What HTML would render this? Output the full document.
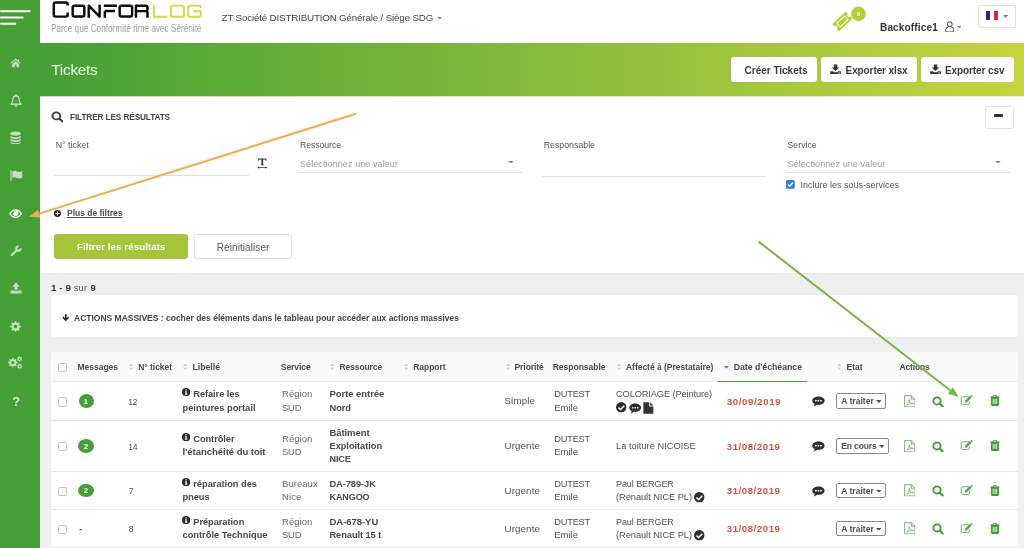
<!DOCTYPE html>
<html lang="fr"><head><meta charset="utf-8"><title>Tickets</title>
<style>
html,body{margin:0;padding:0}
body{width:1024px;height:548px;overflow:hidden;position:relative;background:#efefef;font-family:"Liberation Sans",sans-serif}
.a{position:absolute}
.t{position:absolute;white-space:pre;font-family:"Liberation Sans",sans-serif}
#side{left:0;top:0;width:40.4px;height:548px;background:#44a035}
#top{left:40px;top:0;width:984px;height:43px;background:#fff}
#bar{left:40px;top:43px;width:984px;height:53.3px;background:linear-gradient(90deg,#44a035 0%,#c6d440 100%)}
#filt{left:40px;top:96px;width:984px;height:177px;background:#fff;border-bottom:1px solid #e8e8e8}
.card{background:#fff;border-radius:3px}
.ul{height:1px;background:#e1e1e1}
.btnw{background:#fff;border-radius:3px}
.cb{width:7.3px;height:7.3px;border:.8px solid #c6c6c6;border-radius:2px;background:#fff}
.sep{left:51px;width:967px;height:1px;background:#e8e8e8}
.st{border:1px solid #8a8a8a;border-radius:2px;background:#fff;box-sizing:border-box}
.badge{background:#44a035;border-radius:50%}
#tx{position:absolute;left:0;top:0;width:1024px;height:548px;will-change:transform}

</style></head>
<body>
<div class="a" id="top"></div>
<div class="a" id="bar"></div>
<div class="a" id="filt"></div>
<div class="a" style="left:40px;top:96px;width:984px;height:1px;opacity:.32;background:linear-gradient(90deg,#44a035 0%,#c6d440 100%)"></div>
<div class="a" id="side"></div>
<!-- header buttons -->
<div class="a btnw" style="left:731px;top:57px;width:86px;height:25px"></div>
<div class="a btnw" style="left:821px;top:57px;width:95.5px;height:25px"></div>
<div class="a btnw" style="left:920.5px;top:57px;width:93.5px;height:25px"></div>
<div class="a" style="left:978px;top:5px;width:38px;height:23px;border:1px solid #ddd;border-radius:2px;box-sizing:border-box"></div>
<!-- filter panel -->
<div class="a" style="left:984.5px;top:105.5px;width:29px;height:23px;border:1px solid #e2e2e2;border-radius:3px;box-sizing:border-box"></div>
<div class="a" style="left:993.75px;top:114px;width:9.5px;height:3px;background:#333;border-radius:1px"></div>
<div class="a ul" style="left:54px;top:175px;width:195px"></div>
<div class="a ul" style="left:298px;top:172px;width:224px"></div>
<div class="a ul" style="left:542px;top:176px;width:224px"></div>
<div class="a ul" style="left:786px;top:172px;width:224px"></div>
<div class="a" style="left:54.25px;top:234.25px;width:134px;height:24.5px;background:#a5c63b;border-radius:3px"></div>
<div class="a" style="left:194.25px;top:234.25px;width:97.75px;height:24.5px;background:#fff;border:1px solid #e0e0e0;border-radius:3px;box-sizing:border-box"></div>
<!-- cards -->
<div class="a card" style="left:51px;top:295px;width:967px;height:42px"></div>
<div class="a" style="left:51px;top:352px;width:967px;height:196px;background:#fff;border-radius:3px 3px 0 0"></div>
<div class="a" style="left:51px;top:352px;width:967px;height:29px;background:#fafafa;border-radius:3px 3px 0 0;border-bottom:1px solid #eee"></div>
<div class="a" style="left:718px;top:380.5px;width:89px;height:1.5px;background:#44a035"></div>
<div class="a sep" style="top:420px"></div>
<div class="a sep" style="top:471px"></div>
<div class="a sep" style="top:509px"></div>
<div class="a sep" style="top:547px"></div>
<!-- checkboxes -->
<div class="a cb" style="left:58px;top:362.8px"></div>
<div class="a cb" style="left:58px;top:397.3px"></div>
<div class="a cb" style="left:58px;top:442.2px"></div>
<div class="a cb" style="left:58px;top:487px"></div>
<div class="a cb" style="left:58px;top:524.7px"></div>
<!-- badges -->
<div class="a badge" style="left:78.5px;top:394.2px;width:15px;height:14px"></div>
<div class="a badge" style="left:78.25px;top:439.3px;width:16px;height:13.6px"></div>
<div class="a badge" style="left:78.25px;top:484.2px;width:16px;height:13.2px"></div>
<!-- state buttons -->
<div class="a st" style="left:836px;top:393px;width:50px;height:16px"></div>
<div class="a st" style="left:836px;top:438px;width:53px;height:16px"></div>
<div class="a st" style="left:836px;top:483px;width:50px;height:15px"></div>
<div class="a st" style="left:836px;top:521px;width:50px;height:15px"></div>

<div id="tx">
<span class="t" style="left:221.60px;top:11.00px;font-size:9.75px;line-height:13.65px;font-weight:400;color:#444;letter-spacing:-0.152px;">ZT Société DISTRIBUTION Générale / Siège SDG</span>
<span class="t" style="left:880.00px;top:21.00px;font-size:10.0px;line-height:14.0px;font-weight:700;color:#333;letter-spacing:0.169px;">Backoffice1</span>
<span class="t" style="left:51.25px;top:59.00px;font-size:15.25px;line-height:21.35px;font-weight:400;color:rgba(255,255,255,.92);letter-spacing:-0.212px;">Tickets</span>
<span class="t" style="left:744.60px;top:64.00px;font-size:10.0px;line-height:14.0px;font-weight:700;color:#3a3a3a;letter-spacing:-0.016px;">Créer Tickets</span>
<span class="t" style="left:845.60px;top:64.00px;font-size:10.0px;line-height:14.0px;font-weight:700;color:#3a3a3a;letter-spacing:-0.106px;">Exporter xlsx</span>
<span class="t" style="left:945.00px;top:64.00px;font-size:10.0px;line-height:14.0px;font-weight:700;color:#3a3a3a;letter-spacing:-0.099px;">Exporter csv</span>
<span class="t" style="left:70.00px;top:112.00px;font-size:8.25px;line-height:11.55px;font-weight:700;color:#444;letter-spacing:-0.120px;">FILTRER LES RÉSULTATS</span>
<span class="t" style="left:55.75px;top:139.00px;font-size:8.75px;line-height:12.25px;font-weight:400;color:#555;letter-spacing:0.036px;">N° ticket</span>
<span class="t" style="left:300.00px;top:139.00px;font-size:8.75px;line-height:12.25px;font-weight:400;color:#555;letter-spacing:-0.092px;">Ressource</span>
<span class="t" style="left:543.75px;top:139.00px;font-size:8.75px;line-height:12.25px;font-weight:400;color:#555;letter-spacing:0.016px;">Responsable</span>
<span class="t" style="left:787.50px;top:139.00px;font-size:8.75px;line-height:12.25px;font-weight:400;color:#555;letter-spacing:0.009px;">Service</span>
<span class="t" style="left:300.00px;top:158.00px;font-size:9.0px;line-height:12.6px;font-weight:400;color:#999;letter-spacing:0.084px;">Sélectionnez une valeur</span>
<span class="t" style="left:787.50px;top:158.00px;font-size:9.0px;line-height:12.6px;font-weight:400;color:#999;letter-spacing:0.084px;">Sélectionnez une valeur</span>
<span class="t" style="left:800.50px;top:179.00px;font-size:9.0px;line-height:12.6px;font-weight:400;color:#555;letter-spacing:-0.002px;">Inclure les sous-services</span>
<span class="t" style="left:67.00px;top:208.00px;font-size:8.5px;line-height:11.9px;font-weight:700;color:#4c4c4c;letter-spacing:-0.017px;text-decoration:underline;">Plus de filtres</span>
<span class="t" style="left:77.00px;top:240.00px;font-size:9.75px;line-height:13.65px;font-weight:700;color:#fff;letter-spacing:0.060px;">Filtrer les résultats</span>
<span class="t" style="left:216.75px;top:241.00px;font-size:10.0px;line-height:14.0px;font-weight:400;color:#555;letter-spacing:0.082px;">Réinitialiser</span>
<span class="t" style="left:51.00px;top:281.00px;font-size:9.75px;line-height:13.65px;font-weight:700;color:#333;letter-spacing:0.097px;">1 - 9</span>
<span class="t" style="left:73.80px;top:281.00px;font-size:9.4px;line-height:13.16px;font-weight:400;color:#555;letter-spacing:0.123px;">sur</span>
<span class="t" style="left:90.50px;top:281.00px;font-size:9.4px;line-height:13.16px;font-weight:700;color:#333;letter-spacing:0.781px;">9</span>
<span class="t" style="left:74.00px;top:313.00px;font-size:8.5px;line-height:11.9px;font-weight:700;color:#444;letter-spacing:-0.006px;">ACTIONS MASSIVES : cocher des éléments dans le tableau pour accéder aux actions massives</span>
<span class="t" style="left:77.50px;top:362.00px;font-size:8.5px;line-height:11.9px;font-weight:700;color:#4a4a4a;letter-spacing:-0.018px;">Messages</span>
<span class="t" style="left:138.25px;top:362.00px;font-size:8.5px;line-height:11.9px;font-weight:700;color:#4a4a4a;letter-spacing:-0.040px;">N° ticket</span>
<span class="t" style="left:192.50px;top:361.00px;font-size:8.75px;line-height:12.25px;font-weight:700;color:#4a4a4a;letter-spacing:-0.031px;">Libellé</span>
<span class="t" style="left:280.75px;top:362.00px;font-size:8.5px;line-height:11.9px;font-weight:700;color:#4a4a4a;letter-spacing:-0.036px;">Service</span>
<span class="t" style="left:339.50px;top:362.00px;font-size:8.5px;line-height:11.9px;font-weight:700;color:#4a4a4a;letter-spacing:-0.108px;">Ressource</span>
<span class="t" style="left:413.25px;top:362.00px;font-size:8.5px;line-height:11.9px;font-weight:700;color:#4a4a4a;letter-spacing:-0.049px;">Rapport</span>
<span class="t" style="left:514.50px;top:362.00px;font-size:8.5px;line-height:11.9px;font-weight:700;color:#4a4a4a;letter-spacing:-0.064px;">Priorité</span>
<span class="t" style="left:552.75px;top:362.00px;font-size:8.5px;line-height:11.9px;font-weight:700;color:#4a4a4a;letter-spacing:-0.014px;">Responsable</span>
<span class="t" style="left:626.00px;top:362.00px;font-size:8.5px;line-height:11.9px;font-weight:700;color:#4a4a4a;letter-spacing:-0.027px;">Affecté à (Prestataire)</span>
<span class="t" style="left:733.75px;top:361.00px;font-size:8.75px;line-height:12.25px;font-weight:700;color:#4a4a4a;letter-spacing:-0.031px;">Date d'échéance</span>
<span class="t" style="left:846.50px;top:362.00px;font-size:8.5px;line-height:11.9px;font-weight:700;color:#4a4a4a;letter-spacing:-0.016px;">Etat</span>
<span class="t" style="left:899.50px;top:362.00px;font-size:8.5px;line-height:11.9px;font-weight:700;color:#4a4a4a;letter-spacing:-0.167px;">Actions</span>
<span class="t" style="left:128.30px;top:396.00px;font-size:8.7px;line-height:12.18px;font-weight:400;color:#505050;letter-spacing:-0.586px;">12</span>
<span class="t" style="left:193.25px;top:388.00px;font-size:9.25px;line-height:12.95px;font-weight:700;color:#474747;letter-spacing:-0.050px;">Refaire les</span>
<span class="t" style="left:182.50px;top:402.00px;font-size:9.25px;line-height:12.95px;font-weight:700;color:#474747;letter-spacing:0.030px;">peintures portail</span>
<span class="t" style="left:282.00px;top:387.00px;font-size:9.5px;line-height:13.3px;font-weight:400;color:#6a6a6a;letter-spacing:0.023px;">Région</span>
<span class="t" style="left:282.00px;top:401.00px;font-size:9.4px;line-height:13.16px;font-weight:400;color:#6a6a6a;letter-spacing:-0.182px;">SUD</span>
<span class="t" style="left:329.50px;top:387.00px;font-size:9.5px;line-height:13.3px;font-weight:700;color:#474747;letter-spacing:-0.057px;">Porte entrée</span>
<span class="t" style="left:329.50px;top:402.00px;font-size:9.25px;line-height:12.95px;font-weight:700;color:#474747;letter-spacing:-0.023px;">Nord</span>
<span class="t" style="left:504.50px;top:394.00px;font-size:9.75px;line-height:13.65px;font-weight:400;color:#505050;letter-spacing:0.115px;">Simple</span>
<span class="t" style="left:554.25px;top:388.00px;font-size:9.25px;line-height:12.95px;font-weight:400;color:#505050;letter-spacing:-0.208px;">DUTEST</span>
<span class="t" style="left:554.25px;top:401.00px;font-size:9.5px;line-height:13.3px;font-weight:400;color:#505050;letter-spacing:-0.003px;">Emile</span>
<span class="t" style="left:616.00px;top:388.00px;font-size:9.25px;line-height:12.95px;font-weight:400;color:#505050;letter-spacing:-0.109px;">COLORIAGE (Peinture)</span>
<span class="t" style="left:726.75px;top:395.00px;font-size:9.6px;line-height:13.44px;font-weight:700;color:#d8513d;letter-spacing:0.648px;">30/09/2019</span>
<span class="t" style="left:841.25px;top:396.00px;font-size:8.5px;line-height:11.9px;font-weight:700;color:#4c4c4c;letter-spacing:0.024px;">A traiter</span>
<span class="t" style="left:128.30px;top:441.00px;font-size:8.7px;line-height:12.18px;font-weight:400;color:#505050;letter-spacing:-0.486px;">14</span>
<span class="t" style="left:193.25px;top:433.00px;font-size:9.25px;line-height:12.95px;font-weight:700;color:#474747;letter-spacing:-0.042px;">Contrôler</span>
<span class="t" style="left:182.50px;top:445.00px;font-size:9.5px;line-height:13.3px;font-weight:700;color:#474747;letter-spacing:-0.027px;">l'étanchéité du toit</span>
<span class="t" style="left:282.00px;top:432.00px;font-size:9.5px;line-height:13.3px;font-weight:400;color:#6a6a6a;letter-spacing:0.023px;">Région</span>
<span class="t" style="left:282.00px;top:445.00px;font-size:9.4px;line-height:13.16px;font-weight:400;color:#6a6a6a;letter-spacing:-0.182px;">SUD</span>
<span class="t" style="left:329.50px;top:426.00px;font-size:9.5px;line-height:13.3px;font-weight:700;color:#474747;letter-spacing:-0.082px;">Bâtiment</span>
<span class="t" style="left:329.50px;top:440.00px;font-size:9.25px;line-height:12.95px;font-weight:700;color:#474747;letter-spacing:-0.036px;">Exploitation</span>
<span class="t" style="left:329.50px;top:453.00px;font-size:9.0px;line-height:12.6px;font-weight:700;color:#474747;letter-spacing:-0.066px;">NICE</span>
<span class="t" style="left:504.50px;top:439.00px;font-size:9.75px;line-height:13.65px;font-weight:400;color:#505050;letter-spacing:0.116px;">Urgente</span>
<span class="t" style="left:554.25px;top:433.00px;font-size:9.25px;line-height:12.95px;font-weight:400;color:#505050;letter-spacing:-0.208px;">DUTEST</span>
<span class="t" style="left:554.25px;top:445.00px;font-size:9.5px;line-height:13.3px;font-weight:400;color:#505050;letter-spacing:-0.003px;">Emile</span>
<span class="t" style="left:616.00px;top:440.00px;font-size:9.25px;line-height:12.95px;font-weight:400;color:#505050;letter-spacing:0.032px;">La toiture NICOISE</span>
<span class="t" style="left:726.75px;top:440.00px;font-size:9.6px;line-height:13.44px;font-weight:700;color:#d8513d;letter-spacing:0.573px;">31/08/2019</span>
<span class="t" style="left:841.25px;top:441.00px;font-size:8.5px;line-height:11.9px;font-weight:700;color:#4c4c4c;letter-spacing:-0.141px;">En cours</span>
<span class="t" style="left:128.75px;top:485.00px;font-size:8.7px;line-height:12.18px;font-weight:400;color:#505050;letter-spacing:-0.594px;">7</span>
<span class="t" style="left:193.25px;top:478.00px;font-size:9.25px;line-height:12.95px;font-weight:700;color:#474747;letter-spacing:0.000px;">réparation des</span>
<span class="t" style="left:182.50px;top:491.00px;font-size:9.25px;line-height:12.95px;font-weight:700;color:#474747;letter-spacing:-0.050px;">pneus</span>
<span class="t" style="left:282.00px;top:477.00px;font-size:9.5px;line-height:13.3px;font-weight:400;color:#6a6a6a;letter-spacing:0.051px;">Bureaux</span>
<span class="t" style="left:282.00px;top:490.00px;font-size:9.5px;line-height:13.3px;font-weight:400;color:#6a6a6a;letter-spacing:0.121px;">Nice</span>
<span class="t" style="left:329.50px;top:478.00px;font-size:9.25px;line-height:12.95px;font-weight:700;color:#474747;letter-spacing:-0.059px;">DA-789-JK</span>
<span class="t" style="left:329.50px;top:491.00px;font-size:9.0px;line-height:12.6px;font-weight:700;color:#474747;letter-spacing:-0.083px;">KANGOO</span>
<span class="t" style="left:504.50px;top:484.00px;font-size:9.75px;line-height:13.65px;font-weight:400;color:#505050;letter-spacing:0.116px;">Urgente</span>
<span class="t" style="left:554.25px;top:478.00px;font-size:9.25px;line-height:12.95px;font-weight:400;color:#505050;letter-spacing:-0.208px;">DUTEST</span>
<span class="t" style="left:554.25px;top:490.00px;font-size:9.5px;line-height:13.3px;font-weight:400;color:#505050;letter-spacing:-0.003px;">Emile</span>
<span class="t" style="left:616.00px;top:478.00px;font-size:9.0px;line-height:12.6px;font-weight:400;color:#505050;letter-spacing:-0.071px;">Paul BERGER</span>
<span class="t" style="left:616.00px;top:491.00px;font-size:9.25px;line-height:12.95px;font-weight:400;color:#505050;letter-spacing:-0.036px;">(Renault NICE PL)</span>
<span class="t" style="left:726.75px;top:484.00px;font-size:9.6px;line-height:13.44px;font-weight:700;color:#d8513d;letter-spacing:0.573px;">31/08/2019</span>
<span class="t" style="left:841.25px;top:486.00px;font-size:8.5px;line-height:11.9px;font-weight:700;color:#4c4c4c;letter-spacing:0.024px;">A traiter</span>
<span class="t" style="left:79.25px;top:523.00px;font-size:8.7px;line-height:12.18px;font-weight:700;color:#474747;letter-spacing:-0.156px;">-</span>
<span class="t" style="left:128.75px;top:523.00px;font-size:8.7px;line-height:12.18px;font-weight:400;color:#505050;letter-spacing:-0.344px;">8</span>
<span class="t" style="left:193.25px;top:516.00px;font-size:9.25px;line-height:12.95px;font-weight:700;color:#474747;letter-spacing:-0.037px;">Préparation</span>
<span class="t" style="left:182.50px;top:529.00px;font-size:9.25px;line-height:12.95px;font-weight:700;color:#474747;letter-spacing:0.020px;">contrôle Technique</span>
<span class="t" style="left:282.00px;top:515.00px;font-size:9.5px;line-height:13.3px;font-weight:400;color:#6a6a6a;letter-spacing:0.023px;">Région</span>
<span class="t" style="left:282.00px;top:528.00px;font-size:9.4px;line-height:13.16px;font-weight:400;color:#6a6a6a;letter-spacing:-0.182px;">SUD</span>
<span class="t" style="left:329.50px;top:515.00px;font-size:9.5px;line-height:13.3px;font-weight:700;color:#474747;letter-spacing:-0.040px;">DA-678-YU</span>
<span class="t" style="left:329.50px;top:529.00px;font-size:9.25px;line-height:12.95px;font-weight:700;color:#474747;letter-spacing:-0.057px;">Renault 15 t</span>
<span class="t" style="left:504.50px;top:522.00px;font-size:9.75px;line-height:13.65px;font-weight:400;color:#505050;letter-spacing:0.116px;">Urgente</span>
<span class="t" style="left:554.25px;top:516.00px;font-size:9.25px;line-height:12.95px;font-weight:400;color:#505050;letter-spacing:-0.208px;">DUTEST</span>
<span class="t" style="left:554.25px;top:528.00px;font-size:9.5px;line-height:13.3px;font-weight:400;color:#505050;letter-spacing:-0.003px;">Emile</span>
<span class="t" style="left:616.00px;top:516.00px;font-size:9.0px;line-height:12.6px;font-weight:400;color:#505050;letter-spacing:-0.071px;">Paul BERGER</span>
<span class="t" style="left:616.00px;top:529.00px;font-size:9.25px;line-height:12.95px;font-weight:400;color:#505050;letter-spacing:-0.036px;">(Renault NICE PL)</span>
<span class="t" style="left:726.75px;top:522.00px;font-size:9.6px;line-height:13.44px;font-weight:700;color:#d8513d;letter-spacing:0.573px;">31/08/2019</span>
<span class="t" style="left:841.25px;top:524.00px;font-size:8.5px;line-height:11.9px;font-weight:700;color:#4c4c4c;letter-spacing:0.024px;">A traiter</span>
<span class="t" style="left:83.60px;top:396.00px;font-size:8px;line-height:11.2px;font-weight:700;color:#fff;letter-spacing:0.347px;">1</span>
<span class="t" style="left:83.80px;top:441.00px;font-size:8px;line-height:11.2px;font-weight:700;color:#fff;letter-spacing:0.547px;">2</span>
<span class="t" style="left:83.80px;top:485.00px;font-size:8px;line-height:11.2px;font-weight:700;color:#fff;letter-spacing:0.547px;">2</span>
<span class="t" style="left:12.20px;top:393.00px;font-size:13px;line-height:18.2px;font-weight:700;color:rgba(255,255,255,.75);letter-spacing:-0.453px;">?</span>
</div>
<svg width="0" height="0" style="position:absolute"><defs><symbol id="i-search" viewBox="0 0 16 16" preserveAspectRatio="none"><circle cx="6.800" cy="6.800" r="4.900" fill="none" stroke="currentColor" stroke-width="2.500"/><path d="M10.700 10.700 L14.700 14.700" stroke="currentColor" stroke-width="2.900" stroke-linecap="round"/></symbol><symbol id="i-home" viewBox="0 0 16 14" preserveAspectRatio="none"><path d="M8 .8 L.6 7 L1.6 8.2 L8 2.9 L14.4 8.2 L15.4 7 L12.9 4.9 V1.6 H11.1 V3.4 Z M8 4.2 L3 8.4 V13 H6.7 V9.6 H9.3 V13 H13 V8.4 Z" fill="currentColor"/></symbol><symbol id="i-bell" viewBox="0 0 16 16" preserveAspectRatio="none"><path d="M8 2.200 C5.100 2.200 3.900 4.300 3.900 6.700 C3.900 9.600 2.700 11.100 1.200 12.200 H14.800 C13.300 11.100 12.100 9.600 12.100 6.700 C12.100 4.300 10.900 2.200 8 2.200 Z" fill="none" stroke="currentColor" stroke-width="1.350" stroke-linejoin="round"/><path d="M6.300 13.100 a1.700 1.700 0 0 0 3.400 0" fill="none" stroke="currentColor" stroke-width="1.200"/><path d="M8 .9 V2.200" stroke="currentColor" stroke-width="1.500" stroke-linecap="round"/></symbol><symbol id="i-db" viewBox="0 0 14 16" preserveAspectRatio="none"><ellipse cx="7" cy="3.1" rx="6.6" ry="2.6" fill="currentColor"/><path d="M.4 5.1 c0 1.3 3 2.4 6.6 2.4 s6.600 -1.1 6.600 -2.4 v2.100 c0 1.3 -3 2.4 -6.600 2.4 s-6.600 -1.1 -6.600 -2.4z M.4 8.700 c0 1.3 3 2.4 6.6 2.4 s6.600 -1.1 6.600 -2.4 v2.100 c0 1.3 -3 2.4 -6.600 2.4 s-6.600 -1.1 -6.600 -2.4z M.4 12.3 c0 1.3 3 2.4 6.6 2.4 s6.600 -1.1 6.600 -2.4 v1.4 c0 1.3 -3 2.300 -6.600 2.300 s-6.600 -1 -6.600 -2.300z" fill="currentColor"/></symbol><symbol id="i-flag" viewBox="0 0 16 14" preserveAspectRatio="none"><rect x=".6" y=".3" width="1.4" height="13.4" rx=".5" fill="currentColor"/><path d="M3 1.900 C5 .7 7 .9 8.700 1.900 C10.300 2.800 12.700 2.600 15.4 1.200 V9.300 C12.700 10.700 10.300 10.900 8.700 10 C7 9 5 8.800 3 10 Z" fill="currentColor"/></symbol><symbol id="i-eye" viewBox="0 0 16 12" preserveAspectRatio="none"><path d="M1 6 C3.200 2.600 5.600 1.200 8 1.200 S12.800 2.600 15 6 C12.800 9.400 10.400 10.800 8 10.800 S3.200 9.400 1 6Z" fill="none" stroke="currentColor" stroke-width="1.500" stroke-linejoin="round"/><path d="M8 2 a3.500 3.500 0 1 1 -3.500 3.500 a.5 .5 0 0 0 .9 .1 a2.500 2.500 0 0 1 2.700 -2.700 a.5 .5 0 0 0 -.1 -.9z" fill="currentColor"/></symbol><symbol id="i-wrench" viewBox="0 0 16 16" preserveAspectRatio="none"><path d="M2.500 13.500 L9.300 6.700" stroke="currentColor" stroke-width="3.100" stroke-linecap="round"/><path d="M14.200 4.550 A3 3 0 1 1 11.450 1.800" fill="none" stroke="currentColor" stroke-width="2.700"/></symbol><symbol id="i-upload" viewBox="0 0 16 16" preserveAspectRatio="none"><path d="M8 .8 L12.900 6.200 H10 V10.200 H6 V6.200 H3.100 Z" fill="currentColor"/><path fill-rule="evenodd" d="M.6 11.300 H4.800 V11.800 H11.200 V11.300 H15.400 V15.200 H.6 Z M11.300 13 h1.100 v1.100 h-1.100z M13.100 13 h1.100 v1.100 h-1.100z" fill="currentColor"/></symbol><symbol id="i-download" viewBox="0 0 16 16" preserveAspectRatio="none"><path d="M8 10.800 L13.600 5.200 H10.500 V.8 H5.500 V5.200 H2.400 Z" fill="currentColor"/><path fill-rule="evenodd" d="M.3 11 H4.200 L6 12.700 H10 L11.800 11 H15.700 V15.400 H.3 Z M11.400 13.100 h1.200 v1.200 h-1.200z M13.300 13.100 h1.200 v1.200 h-1.200z" fill="currentColor"/></symbol><symbol id="i-cog" viewBox="0 0 16 16" preserveAspectRatio="none"><path fill-rule="evenodd" d="M13.53 6.62 L15.61 6.80 L15.61 9.20 L13.53 9.38 L12.89 10.93 L14.23 12.53 L12.53 14.23 L10.93 12.89 L9.38 13.53 L9.20 15.61 L6.80 15.61 L6.62 13.53 L5.07 12.89 L3.47 14.23 L1.77 12.53 L3.11 10.93 L2.47 9.38 L0.39 9.20 L0.39 6.80 L2.47 6.62 L3.11 5.07 L1.77 3.47 L3.47 1.77 L5.07 3.11 L6.62 2.47 L6.80 0.39 L9.20 0.39 L9.38 2.47 L10.93 3.11 L12.53 1.77 L14.23 3.47 L12.89 5.07Z M10.60 8.00 A2.6 2.6 0 1 0 5.40 8.00 A2.6 2.6 0 1 0 10.60 8.00Z" fill="currentColor"/></symbol><symbol id="i-cogs" viewBox="0 0 20 18" preserveAspectRatio="none"><path fill-rule="evenodd" d="M11.16 7.86 L12.92 8.00 L12.92 10.00 L11.16 10.14 L10.63 11.42 L11.78 12.76 L10.36 14.18 L9.02 13.03 L7.74 13.56 L7.60 15.32 L5.60 15.32 L5.46 13.56 L4.18 13.03 L2.84 14.18 L1.42 12.76 L2.57 11.42 L2.04 10.14 L0.28 10.00 L0.28 8.00 L2.04 7.86 L2.57 6.58 L1.42 5.24 L2.84 3.82 L4.18 4.97 L5.46 4.44 L5.60 2.68 L7.60 2.68 L7.74 4.44 L9.02 4.97 L10.36 3.82 L11.78 5.24 L10.63 6.58Z M8.80 9.00 A2.2 2.2 0 1 0 4.40 9.00 A2.2 2.2 0 1 0 8.80 9.00Z M18.32 3.37 L19.36 3.44 L19.36 4.56 L18.32 4.63 L18.03 5.34 L18.71 6.12 L17.92 6.91 L17.14 6.23 L16.43 6.52 L16.36 7.56 L15.24 7.56 L15.17 6.52 L14.46 6.23 L13.68 6.91 L12.89 6.12 L13.57 5.34 L13.28 4.63 L12.24 4.56 L12.24 3.44 L13.28 3.37 L13.57 2.66 L12.89 1.88 L13.68 1.09 L14.46 1.77 L15.17 1.48 L15.24 0.44 L16.36 0.44 L16.43 1.48 L17.14 1.77 L17.92 1.09 L18.71 1.88 L18.03 2.66Z M17.00 4.00 A1.2 1.2 0 1 0 14.60 4.00 A1.2 1.2 0 1 0 17.00 4.00Z M18.32 13.37 L19.36 13.44 L19.36 14.56 L18.32 14.63 L18.03 15.34 L18.71 16.12 L17.92 16.91 L17.14 16.23 L16.43 16.52 L16.36 17.56 L15.24 17.56 L15.17 16.52 L14.46 16.23 L13.68 16.91 L12.89 16.12 L13.57 15.34 L13.28 14.63 L12.24 14.56 L12.24 13.44 L13.28 13.37 L13.57 12.66 L12.89 11.88 L13.68 11.09 L14.46 11.77 L15.17 11.48 L15.24 10.44 L16.36 10.44 L16.43 11.48 L17.14 11.77 L17.92 11.09 L18.71 11.88 L18.03 12.66Z M17.00 14.00 A1.2 1.2 0 1 0 14.60 14.00 A1.2 1.2 0 1 0 17.00 14.00Z" fill="currentColor"/></symbol><symbol id="i-caret" viewBox="0 0 10 5" preserveAspectRatio="none"><path d="M0 0 H10 L5 5Z" fill="currentColor"/></symbol><symbol id="i-sort" viewBox="0 0 8 14" preserveAspectRatio="none"><path d="M0 5.600 L4 .8 L8 5.600Z M0 8.400 L4 13.200 L8 8.400Z" fill="currentColor"/></symbol><symbol id="i-info" viewBox="0 0 16 16" preserveAspectRatio="none"><circle cx="8" cy="8" r="8" fill="currentColor"/><path d="M6.900 2.600 h2.300 v2.200 h-2.300z M6 6.300 h3.300 v5 h1 v1.700 h-4.600 v-1.700 h1.100 v-3.300 h-.8z" fill="#fff"/></symbol><symbol id="i-check" viewBox="0 0 16 16" preserveAspectRatio="none"><circle cx="8" cy="8" r="8" fill="currentColor"/><path d="M3.600 8.300 L6.900 11.500 L12.600 5.600" fill="none" stroke="#fff" stroke-width="2.300"/></symbol><symbol id="i-comment" viewBox="0 0 18 16" preserveAspectRatio="none"><path d="M9 .8 C13.800 .8 17.600 3.500 17.600 6.900 S13.800 13 9 13 C8.300 13 7.700 12.950 7.100 12.850 C5.800 14.100 4 15 2.200 15.200 C3.200 14.300 3.800 13.100 3.800 11.800 C1.700 10.700 .4 8.900 .4 6.900 C.4 3.500 4.200 .8 9 .8Z" fill="currentColor"/><circle cx="5.400" cy="6.900" r="1.250" fill="#fff"/><circle cx="9" cy="6.900" r="1.250" fill="#fff"/><circle cx="12.600" cy="6.900" r="1.250" fill="#fff"/></symbol><symbol id="i-file" viewBox="0 0 14 16" preserveAspectRatio="none"><path d="M.5 .3 H8 V5.800 H13.500 V15.700 H.5Z M9.200 .3 L13.500 4.600 H9.200Z" fill="currentColor"/></symbol><symbol id="i-pdf" viewBox="0 0 14 16" preserveAspectRatio="none"><path d="M.8 .8 H8.700 L13.200 5.300 V15.200 H.8Z M8.700 .8 V5.300 H13.200" fill="none" stroke="currentColor" stroke-width="1.150" stroke-linejoin="round"/><path d="M3 13.300 C4.600 12.400 6.300 9.500 6.700 6.600 C6.800 5.600 5.800 5.600 5.900 6.600 C6.200 9 8.500 11.300 11 11.300 C11.900 11.300 11.700 10.500 10.800 10.500 C8.500 10.500 5.200 11.500 3.300 12.800" fill="none" stroke="currentColor" stroke-width=".9"/></symbol><symbol id="i-edit" viewBox="0 0 18 15" preserveAspectRatio="none"><path d="M12.200 2.500 H4 C2.700 2.500 1.700 3.500 1.700 4.800 V11.500 C1.700 12.800 2.700 13.800 4 13.800 H10.800 C12.100 13.800 13.100 12.800 13.100 11.500 V9.800" fill="none" stroke="currentColor" stroke-width="1.250" stroke-linecap="round"/><path d="M6.900 8.300 L13.600 1.600 L16 4 L9.300 10.700 H6.900Z M14.400 .9 L15.100 .3 C15.500 -.1 16 -.1 16.400 .3 L17.300 1.200 C17.700 1.600 17.700 2.100 17.300 2.500 L16.700 3.200Z" fill="currentColor"/></symbol><symbol id="i-trash" viewBox="0 0 14 16" preserveAspectRatio="none"><path fill-rule="evenodd" d="M4.800 .4 H9.200 L10.200 2.300 H13.600 V3.700 H12.700 V14 C12.700 15 12 15.700 11 15.700 H3 C2 15.700 1.300 15 1.300 14 V3.700 H.4 V2.300 H3.800Z M5.500 1.500 L5.100 2.300 H8.900 L8.500 1.500Z M3.900 5.400 V13 H5.100 V5.400Z M6.400 5.400 V13 H7.600 V5.400Z M8.900 5.400 V13 H10.100 V5.400Z" fill="currentColor"/></symbol><symbol id="i-plus" viewBox="0 0 16 16" preserveAspectRatio="none"><circle cx="8" cy="8" r="8" fill="currentColor"/><path d="M6.700 3.300 h2.600 v3.400 h3.400 v2.600 h-3.400 v3.400 h-2.600 v-3.400 h-3.400 v-2.600 h3.400z" fill="#fff"/></symbol><symbol id="i-adown" viewBox="0 0 14 14" preserveAspectRatio="none"><path d="M5.400 .6 H8.600 V7.800 L11.600 4.800 L13.500 6.700 L7 13.300 L.5 6.700 L2.400 4.800 L5.400 7.800Z" fill="currentColor"/></symbol><symbol id="i-twidth" viewBox="0 0 16 16" preserveAspectRatio="none"><path d="M1.700 .8 H14.300 V4.200 H13.500 C13.300 2.800 12.800 2.100 11.500 2.100 H9.300 V8.800 C9.300 9.500 9.700 9.700 10.800 9.700 V10.500 H5.200 V9.700 C6.300 9.700 6.700 9.500 6.700 8.800 V2.100 H4.500 C3.200 2.100 2.700 2.800 2.500 4.200 H1.700Z" fill="currentColor"/><path d="M.6 13.500 L3.200 11.700 V12.950 H12.800 V11.700 L15.400 13.500 L12.800 15.300 V14.050 H3.200 V15.300Z" fill="currentColor"/></symbol><symbol id="i-user" viewBox="0 0 14 16" preserveAspectRatio="none"><circle cx="7" cy="4.600" r="3.500" fill="none" stroke="currentColor" stroke-width="1.450"/><path d="M4.300 8.200 C2.300 8.800 .9 10.300 .9 12.600 C.9 14.200 1.800 15.200 3.300 15.200 H10.700 C12.200 15.200 13.100 14.200 13.100 12.600 C13.100 10.300 11.700 8.800 9.700 8.200" fill="none" stroke="currentColor" stroke-width="1.450" stroke-linejoin="round"/></symbol></defs></svg>
<svg class="a" style="left:0;top:0" width="40" height="43"><path d="M1 11.200 H29.600 M1 17.600 H22.600 M1 23.800 H15.300" stroke="#fff" stroke-width="2" stroke-linecap="round"/></svg>
<svg class="a" style="left:10.30px;top:58.00px;color:#fff;opacity:0.68" width="11.30" height="10.00"><use href="#i-home"/></svg>
<svg class="a" style="left:10.00px;top:94.00px;color:#fff;opacity:0.78" width="12.00" height="13.30"><use href="#i-bell"/></svg>
<svg class="a" style="left:10.40px;top:131.30px;color:#fff;opacity:0.68" width="11.10" height="13.30"><use href="#i-db"/></svg>
<svg class="a" style="left:9.80px;top:170.00px;color:#fff;opacity:0.68" width="12.80" height="11.20"><use href="#i-flag"/></svg>
<svg class="a" style="left:9.30px;top:208.80px;color:#fff" width="13.30" height="9.40"><use href="#i-eye"/></svg>
<svg class="a" style="left:9.90px;top:245.00px;color:#fff;opacity:0.68" width="12.10" height="11.80"><use href="#i-wrench"/></svg>
<svg class="a" style="left:9.90px;top:282.00px;color:#fff;opacity:0.68" width="12.10" height="12.00"><use href="#i-upload"/></svg>
<svg class="a" style="left:10.30px;top:320.50px;color:#fff;opacity:0.68" width="11.10" height="11.10"><use href="#i-cog"/></svg>
<svg class="a" style="left:8.30px;top:356.40px;color:#fff;opacity:0.68" width="14.70" height="13.20"><use href="#i-cogs"/></svg>
<svg class="a" style="left:436.70px;top:16.50px;color:#8a8a8a" width="5.10" height="2.60"><use href="#i-caret"/></svg>
<svg class="a" style="left:944.50px;top:20.50px;color:#555" width="9.50" height="11.50"><use href="#i-user"/></svg>
<svg class="a" style="left:956.60px;top:25.80px;color:#858585" width="4.80" height="2.50"><use href="#i-caret"/></svg>
<svg class="a" style="left:1002.50px;top:15.30px;color:#858585" width="5.30" height="2.90"><use href="#i-caret"/></svg>
<div class="a" style="left:986.300px;top:10.700px;width:12.200px;height:9.200px;background:linear-gradient(90deg,#172f86 0 33.300%,#fff 33.300% 66.600%,#e0262f 66.600% 100%)"></div>
<svg class="a" style="left:830.20px;top:64.10px;color:#333" width="11.10" height="10.50"><use href="#i-download"/></svg>
<svg class="a" style="left:929.90px;top:64.10px;color:#333" width="11.10" height="10.50"><use href="#i-download"/></svg>
<svg class="a" style="left:50.70px;top:111.20px;color:#3c3c3c" width="12.60" height="11.50"><use href="#i-search"/></svg>
<svg class="a" style="left:257.00px;top:158.00px;color:#333" width="10.60" height="11.20"><use href="#i-twidth"/></svg>
<svg class="a" style="left:507.50px;top:160.70px;color:#858585" width="5.50" height="2.80"><use href="#i-caret"/></svg>
<svg class="a" style="left:995.00px;top:160.70px;color:#858585" width="5.80" height="2.80"><use href="#i-caret"/></svg>
<svg class="a" style="left:54.00px;top:209.70px;color:#222" width="6.90" height="6.90"><use href="#i-plus"/></svg>
<svg class="a" style="left:786px;top:180.200px" width="8.800" height="8.800" viewBox="0 0 9 9"><rect width="9" height="9" rx="1.600" fill="#3b7ddd"/><path d="M2 4.700 L3.800 6.400 L7.100 2.600" fill="none" stroke="#fff" stroke-width="1.300"/></svg>
<svg class="a" style="left:62.00px;top:314.30px;color:#222" width="7.50" height="7.50"><use href="#i-adown"/></svg>
<svg class="a" style="left:129.05px;top:363.10px;color:#d2d2d2" width="4.60" height="7.40"><use href="#i-sort"/></svg>
<svg class="a" style="left:183.05px;top:363.10px;color:#d2d2d2" width="4.60" height="7.40"><use href="#i-sort"/></svg>
<svg class="a" style="left:330.30px;top:363.10px;color:#d2d2d2" width="4.60" height="7.40"><use href="#i-sort"/></svg>
<svg class="a" style="left:403.80px;top:363.10px;color:#d2d2d2" width="4.60" height="7.40"><use href="#i-sort"/></svg>
<svg class="a" style="left:505.55px;top:363.10px;color:#d2d2d2" width="4.60" height="7.40"><use href="#i-sort"/></svg>
<svg class="a" style="left:616.80px;top:363.10px;color:#d2d2d2" width="4.60" height="7.40"><use href="#i-sort"/></svg>
<svg class="a" style="left:837.30px;top:363.10px;color:#d2d2d2" width="4.60" height="7.40"><use href="#i-sort"/></svg>
<svg class="a" style="left:724.30px;top:366.00px;color:#44a035" width="5.00" height="2.70"><use href="#i-caret"/></svg>
<svg class="a" style="left:182.20px;top:388.40px;color:#2b2b2b" width="8.20" height="8.20"><use href="#i-info"/></svg>
<svg class="a" style="left:812.30px;top:396.20px;color:#2e2e2e" width="12.90" height="10.90"><use href="#i-comment"/></svg>
<svg class="a" style="left:875.80px;top:400.00px;color:#505050" width="5.50" height="2.90"><use href="#i-caret"/></svg>
<svg class="a" style="left:903.80px;top:394.70px;color:#5cb85c" width="11.60" height="12.60"><use href="#i-pdf"/></svg>
<svg class="a" style="left:931.80px;top:395.70px;color:#3f9b32" width="11.80" height="11.60"><use href="#i-search"/></svg>
<svg class="a" style="left:960.40px;top:395.30px;color:#4fa944" width="13.00" height="10.50"><use href="#i-edit"/></svg>
<svg class="a" style="left:990.40px;top:395.30px;color:#3f9b32" width="9.90" height="11.10"><use href="#i-trash"/></svg>
<svg class="a" style="left:182.20px;top:433.15px;color:#2b2b2b" width="8.20" height="8.20"><use href="#i-info"/></svg>
<svg class="a" style="left:812.30px;top:441.20px;color:#2e2e2e" width="12.90" height="10.90"><use href="#i-comment"/></svg>
<svg class="a" style="left:878.90px;top:445.00px;color:#505050" width="5.50" height="2.90"><use href="#i-caret"/></svg>
<svg class="a" style="left:903.80px;top:439.70px;color:#5cb85c" width="11.60" height="12.60"><use href="#i-pdf"/></svg>
<svg class="a" style="left:931.80px;top:440.70px;color:#3f9b32" width="11.80" height="11.60"><use href="#i-search"/></svg>
<svg class="a" style="left:960.40px;top:440.30px;color:#4fa944" width="13.00" height="10.50"><use href="#i-edit"/></svg>
<svg class="a" style="left:990.40px;top:440.30px;color:#3f9b32" width="9.90" height="11.10"><use href="#i-trash"/></svg>
<svg class="a" style="left:182.20px;top:478.15px;color:#2b2b2b" width="8.20" height="8.20"><use href="#i-info"/></svg>
<svg class="a" style="left:812.30px;top:485.80px;color:#2e2e2e" width="12.90" height="10.90"><use href="#i-comment"/></svg>
<svg class="a" style="left:875.80px;top:489.60px;color:#505050" width="5.50" height="2.90"><use href="#i-caret"/></svg>
<svg class="a" style="left:903.80px;top:484.30px;color:#5cb85c" width="11.60" height="12.60"><use href="#i-pdf"/></svg>
<svg class="a" style="left:931.80px;top:485.30px;color:#3f9b32" width="11.80" height="11.60"><use href="#i-search"/></svg>
<svg class="a" style="left:960.40px;top:484.90px;color:#4fa944" width="13.00" height="10.50"><use href="#i-edit"/></svg>
<svg class="a" style="left:990.40px;top:484.90px;color:#3f9b32" width="9.90" height="11.10"><use href="#i-trash"/></svg>
<svg class="a" style="left:182.20px;top:515.90px;color:#2b2b2b" width="8.20" height="8.20"><use href="#i-info"/></svg>
<svg class="a" style="left:875.80px;top:527.60px;color:#505050" width="5.50" height="2.90"><use href="#i-caret"/></svg>
<svg class="a" style="left:903.80px;top:522.30px;color:#5cb85c" width="11.60" height="12.60"><use href="#i-pdf"/></svg>
<svg class="a" style="left:931.80px;top:523.30px;color:#3f9b32" width="11.80" height="11.60"><use href="#i-search"/></svg>
<svg class="a" style="left:960.40px;top:522.90px;color:#4fa944" width="13.00" height="10.50"><use href="#i-edit"/></svg>
<svg class="a" style="left:990.40px;top:522.90px;color:#3f9b32" width="9.90" height="11.10"><use href="#i-trash"/></svg>
<svg class="a" style="left:616.00px;top:402.10px;color:#2e2e2e" width="10.50" height="10.50"><use href="#i-check"/></svg>
<svg class="a" style="left:628.80px;top:402.60px;color:#2e2e2e" width="12.40" height="11.00"><use href="#i-comment"/></svg>
<svg class="a" style="left:643.40px;top:401.60px;color:#333" width="10.80" height="12.10"><use href="#i-file"/></svg>
<svg class="a" style="left:694.30px;top:492.20px;color:#2e2e2e" width="10.60" height="10.60"><use href="#i-check"/></svg>
<svg class="a" style="left:694.30px;top:530.00px;color:#2e2e2e" width="10.60" height="10.60"><use href="#i-check"/></svg>
<svg class="a" style="left:830px;top:4px" width="38" height="30" viewBox="0 0 38 30">
<g transform="translate(12.400 17.400) rotate(-43)"><path fill-rule="evenodd" d="M-9.100 -4.900 H9.100 V-1.800 A1.800 1.800 0 0 0 9.100 1.800 V4.900 H-9.100 V1.800 A1.800 1.800 0 0 0 -9.100 -1.800Z M-5.700 -2.900 V2.900 H5.700 V-2.900Z M-4.800 -2 H4.800 V2 H-4.800Z" fill="#b7ce36"/></g>
<circle cx="28.500" cy="9.900" r="7.300" fill="#b7ce36"/></svg>
<span class="t" style="will-change:transform;left:857px;top:11.100px;font-size:5.200px;line-height:7px;font-weight:700;color:#fff">0</span>
<svg class="a" style="left:48px;top:0" width="160" height="40" viewBox="48 0 160 40">
<g fill="none" stroke="#0b0b0b" stroke-width="2.450" stroke-linejoin="round">
<path d="M67.700 5.600 V4.600 Q67.700 2.600 65.700 2.600 H55.800 Q53.800 2.600 53.800 4.600 V14.600 Q53.800 16.600 55.800 16.600 H65.700 Q67.700 16.600 67.700 14.600 V12.600"/>
<rect x="72.700" y="5.700" width="11.600" height="10.900" rx="1.800"/>
<path d="M88.750 17.650 V5.700 L99.650 16.600 V4.650"/>
<path d="M104.850 17.650 V10.900 M103.800 5.700 H116.900 M104.850 10.900 H115"/>
<rect x="119.700" y="5.700" width="12.400" height="10.900" rx="1.800"/>
<path d="M135.950 17.650 V5.700 H145.600 Q147.500 5.700 147.500 7.500 V9.300 Q147.500 11.100 145.600 11.100 H136 M143.500 11.100 H145.600 Q147.500 11.100 147.500 12.900 V17.650"/>
</g>
<g fill="none" stroke="#d2dc3c" stroke-width="1.900" stroke-linejoin="round">
<path d="M153.900 4.700 V16.800 H167.400"/>
<rect x="170.950" y="5.650" width="13.100" height="11.150" rx="2"/>
<path d="M200.800 8 V7.650 Q200.800 5.650 198.800 5.650 H190.150 Q188.150 5.650 188.150 7.650 V14.800 Q188.150 16.800 190.150 16.800 H198.800 Q200.800 16.800 200.800 14.800 V11.300 H193.500"/>
</g></svg>
<span class="t" style="will-change:transform;left:51px;top:21.600px;font-size:10.500px;line-height:13px;color:#9a9a9a;transform-origin:0 50%;transform:scaleX(.781)">Parce que Conformité rime avec Sérénité</span>
<svg class="a" style="left:0;top:0;pointer-events:none" width="1024" height="548"><path d="M356.00 113.80 L39.21 213.64" stroke="#f3ab4c" stroke-width="2.05" fill="none"/><path d="M29.20 216.80 L37.98 209.73 L40.45 217.55Z" fill="#f3ab4c"/><path d="M758.60 241.60 L950.41 390.56" stroke="#78b649" stroke-width="2.05" fill="none"/><path d="M958.70 397.00 L947.89 393.80 L952.92 387.32Z" fill="#78b649"/></svg>
</body></html>
